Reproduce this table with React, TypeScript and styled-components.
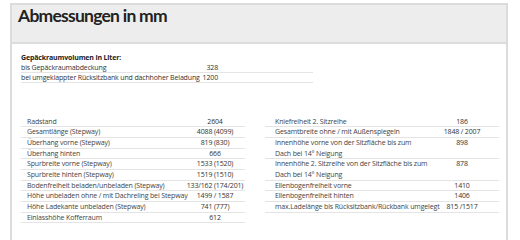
import React from "react";
import styled, { createGlobalStyle } from "styled-components";

const Global = createGlobalStyle`
  html, body {
    margin: 0;
    padding: 0;
    background: #fff;
  }
  body {
    font-family: "Open Sans", "Liberation Sans", sans-serif;
    color: #333;
  }
`;

const Panel = styled.div`
  margin: 3px 0 0 10px;
  width: 494px;
  height: 237px;
  border: 2px solid #dcdcdc;
  border-bottom: none;
  overflow: hidden;
`;

const Header = styled.div`
  height: 37px;
  background: #ededed;
  border-bottom: 2px solid #dcdcdc;
  padding-left: 6px;
  display: flex;
  align-items: flex-start;
`;

const Title = styled.h1`
  margin: 0;
  font-family: Lato, "Open Sans", sans-serif;
  font-size: 17.5px;
  line-height: 22px;
  letter-spacing: -0.75px;
  font-weight: 700;
  color: #222;
`;

const Body = styled.div`
  padding: 9px 7px 0 9px;
  font-size: 7px;
  letter-spacing: -0.15px;
`;

const Volume = styled.div`
  width: 292px;
  line-height: 10px;
  margin-bottom: 33.7px;
`;

const Caption = styled.div`
  font-weight: 700;
  color: #222;
`;

const VolRow = styled.div`
  display: grid;
  grid-template-columns: 177px 20px;
  white-space: nowrap;
  box-shadow: inset 0 -1px 0 #e4e4e4;
`;

const VolValue = styled.span`
  text-align: right;
`;

const Columns = styled.div`
  display: grid;
  grid-template-columns: 224px 234px;
  column-gap: 20px;
  line-height: 10.67px;
`;

const SpecList = styled.div`
  display: flex;
  flex-direction: column;
`;

const SpecRow = styled.div<{ $value: number; $indent: number }>`
  display: grid;
  grid-template-columns: minmax(0, 1fr) ${(p) => p.$value}px;
  padding-left: ${(p) => p.$indent}px;
  box-shadow: inset 0 -1px 0 #e4e4e4;
  color: #444;
`;

const Label = styled.span`
  white-space: nowrap;
`;

const Value = styled.span`
  text-align: center;
  white-space: nowrap;
  color: #333;
`;

const volume = [
  ["bis Gepäckraumabdeckung", "328"],
  ["bei umgeklappter Rücksitzbank und dachhoher Beladung", "1200"],
];

const left: [string[], string][] = [
  [["Radstand"], "2604"],
  [["Gesamtlänge (Stepway)"], "4088 (4099)"],
  [["Überhang vorne (Stepway)"], "819 (830)"],
  [["Überhang hinten"], "666"],
  [["Spurbreite vorne (Stepway)"], "1533 (1520)"],
  [["Spurbreite hinten (Stepway)"], "1519 (1510)"],
  [["Bodenfreiheit beladen/unbeladen (Stepway)"], "133/162 (174/201)"],
  [["Höhe unbeladen ohne / mit Dachreling bei Stepway"], "1499 / 1587"],
  [["Höhe Ladekante unbeladen (Stepway)"], "741 (777)"],
  [["Einlasshöhe Kofferraum"], "612"],
];

const right: [string[], string][] = [
  [["Kniefreiheit 2. Sitzreihe"], "186"],
  [["Gesamtbreite ohne / mit Außenspiegeln"], "1848 / 2007"],
  [["Innenhöhe vorne von der Sitzfläche bis zum", "Dach bei 14° Neigung"], "898"],
  [["Innenhöhe 2. Sitzreihe von der Sitzfläche bis zum", "Dach bei 14° Neigung"], "878"],
  [["Ellenbogenfreiheit vorne"], "1410"],
  [["Ellenbogenfreiheit hinten"], "1406"],
  [["max.Ladelänge bis Rücksitzbank/Rückbank umgelegt"], "815 /1517"],
];

const Spec = ({ rows, value, indent }: { rows: [string[], string][]; value: number; indent: number }) => (
  <SpecList>
    {rows.map(([lines, v]) => (
      <SpecRow key={lines[0]} $value={value} $indent={indent}>
        <Label>
          {lines.map((l, i) => (
            <React.Fragment key={l}>
              {i > 0 && <br />}
              {l}
            </React.Fragment>
          ))}
        </Label>
        <Value>{v}</Value>
      </SpecRow>
    ))}
  </SpecList>
);

export default function App() {
  return (
    <>
      <Global />
      <Panel>
        <Header>
          <Title>Abmessungen in mm</Title>
        </Header>
        <Body>
          <Volume>
            <Caption>Gepäckraumvolumen in Liter:</Caption>
            {volume.map(([k, v]) => (
              <VolRow key={k}>
                <span>{k}</span>
                <VolValue>{v}</VolValue>
              </VolRow>
            ))}
          </Volume>
          <Columns>
            <Spec rows={left} value={60} indent={6} />
            <Spec rows={right} value={74} indent={10} />
          </Columns>
        </Body>
      </Panel>
    </>
  );
}
